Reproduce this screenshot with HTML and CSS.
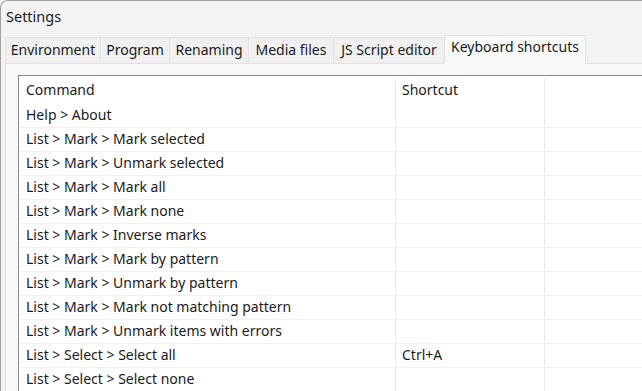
FILE: index.html
```html
<!DOCTYPE html>
<html lang="en">
<head>
  <meta charset="UTF-8" />
  <title>Settings</title>
  <link rel="stylesheet" href="styles.css">
</head>
<body>
  <div class="window">
    <!-- title -->
    <div class="title">Settings</div>

    <!-- tabs -->
    <div class="tabs">
      <div class="tab">Environment</div>
      <div class="tab">Program</div>
      <div class="tab">Renaming</div>
      <div class="tab">Media files</div>
      <div class="tab">JS Script editor</div>
      <div class="tab active">Keyboard shortcuts</div>
    </div>

    <!-- panel with shortcut list -->
    <div class="panel">
      <div class="list">
        <div class="row head">
          <div class="cell cmd">Command</div>
          <div class="cell key">Shortcut</div>
          <div class="cell rest"></div>
        </div>
        <div class="row"><div class="cell cmd">Help &gt; About</div><div class="cell key"></div><div class="cell rest"></div></div>
        <div class="row"><div class="cell cmd">List &gt; Mark &gt; Mark selected</div><div class="cell key"></div><div class="cell rest"></div></div>
        <div class="row"><div class="cell cmd">List &gt; Mark &gt; Unmark selected</div><div class="cell key"></div><div class="cell rest"></div></div>
        <div class="row"><div class="cell cmd">List &gt; Mark &gt; Mark all</div><div class="cell key"></div><div class="cell rest"></div></div>
        <div class="row"><div class="cell cmd">List &gt; Mark &gt; Mark none</div><div class="cell key"></div><div class="cell rest"></div></div>
        <div class="row"><div class="cell cmd">List &gt; Mark &gt; Inverse marks</div><div class="cell key"></div><div class="cell rest"></div></div>
        <div class="row"><div class="cell cmd">List &gt; Mark &gt; Mark by pattern</div><div class="cell key"></div><div class="cell rest"></div></div>
        <div class="row"><div class="cell cmd">List &gt; Mark &gt; Unmark by pattern</div><div class="cell key"></div><div class="cell rest"></div></div>
        <div class="row"><div class="cell cmd">List &gt; Mark &gt; Mark not matching pattern</div><div class="cell key"></div><div class="cell rest"></div></div>
        <div class="row"><div class="cell cmd">List &gt; Mark &gt; Unmark items with errors</div><div class="cell key"></div><div class="cell rest"></div></div>
        <div class="row"><div class="cell cmd">List &gt; Select &gt; Select all</div><div class="cell key">Ctrl+A</div><div class="cell rest"></div></div>
        <div class="row"><div class="cell cmd">List &gt; Select &gt; Select none</div><div class="cell key"></div><div class="cell rest"></div></div>
      </div>
    </div>
  </div>
</body>
</html>
```

FILE: styles.css
```css
* {
  box-sizing: border-box;
  margin: 0;
  padding: 0;
}
html, body {
  height: 100%;
  overflow: hidden;
}
body {
  font-family: "Noto Sans", "Open Sans", sans-serif;
  font-size: 14px;
  color: #1a1a1a;
  background: #f3f3f3;
}
/* window frame */
.window {
  width: 660px;
  height: 400px;
  border-top: 1px solid #a3a3a3;
  border-left: 1px solid #a3a3a3;
  border-top-left-radius: 8px;
  background: #f3f3f3;
}
.title {
  height: 35px;
  padding: 5px 0 0 5px;
  font-size: 14.5px;
}
/* tab strip */
.tabs {
  display: flex;
  align-items: flex-end;
  height: 27px;
  margin-left: 4px;
}
.tab {
  height: 26px;
  line-height: 24px;
  text-align: center;
  border: 1px solid #e2e2e2;
  border-bottom: none;
  margin-right: -1px;
  background: #f0f0f0;
  white-space: nowrap;
}
.tab:nth-child(1) { width: 96px; }
.tab:nth-child(2) { width: 70px; }
.tab:nth-child(3) { width: 80px; }
.tab:nth-child(4) { width: 86px; }
.tab:nth-child(5) { width: 112px; }
.tab.active {
  width: 142px;
  height: 29px;
  line-height: 22px;
  background: #f9f9f9;
  position: relative;
  z-index: 1;
  margin-bottom: -1px;
}
/* panel */
.panel {
  margin-left: 4px;
  border-top: 1px solid #e2e2e2;
  border-left: 1px solid #e2e2e2;
  background: #f9f9f9;
  padding: 11px 0 0 12px;
  height: 340px;
}
.list {
  border-top: 1px solid #8a8a8a;
  border-left: 1px solid #8a8a8a;
  background: #fff;
  height: 330px;
}
.row {
  display: flex;
  height: 24px;
  border-bottom: 1px solid #f0f0f0;
}
.row.head {
  height: 28px;
  border-bottom: none;
  padding-top: 2px;
}
.cell {
  line-height: 22px;
  white-space: nowrap;
}
.row.head .cell {
  line-height: 23px;
}
.cmd {
  width: 376px;
  padding-left: 7px;
}
.key {
  width: 150px;
  padding-left: 6px;
  border-left: 1px solid #ebebeb;
  border-right: 1px solid #ebebeb;
}
.rest {
  flex: 1;
}
```
